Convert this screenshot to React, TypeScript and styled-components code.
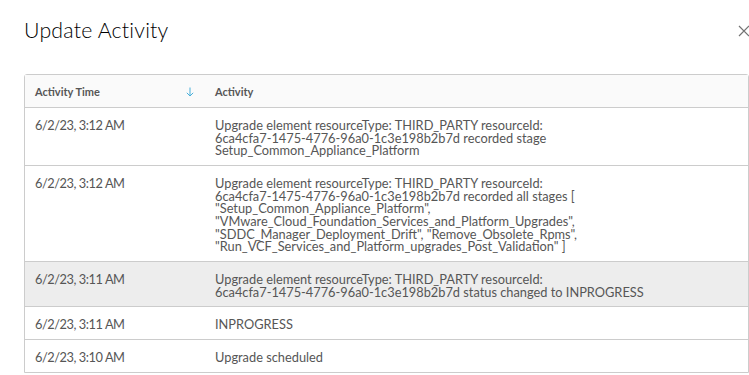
import React from "react";
import styled, { createGlobalStyle } from "styled-components";

const Global = createGlobalStyle`
  html, body { margin: 0; padding: 0; background: #fff; }
  body { font-family: Lato, "Open Sans", "Liberation Sans", sans-serif; overflow: hidden; }
  * { box-sizing: border-box; }
`;

const Modal = styled.div`
  width: 749px;
  height: 375px;
  padding: 0 0 0 24px;
  overflow: hidden;
`;

const Header = styled.div`
  display: flex;
  align-items: center;
  justify-content: space-between;
  height: 62px;
`;

const Title = styled.h3`
  margin: 0 0 2px;
  font-size: 21.3px;
  font-weight: 300;
  color: #000;
  letter-spacing: 0.2px;
`;

const Close = styled.button`
  border: 0;
  background: none;
  padding: 0;
  margin-right: -1px;
  display: flex;
  width: 12px;
  height: 12px;
  cursor: pointer;
`;

const Grid = styled.div`
  margin-top: 12px;
  border: 1px solid #ccc;
  width: 725px;
  border-radius: 3px 3px 0 0;
`;

const Row = styled.div<{ $head?: boolean; $hl?: boolean }>`
  display: grid;
  grid-template-columns: 180px 1fr;
  background: ${(p) => (p.$head ? "#fafafa" : p.$hl ? "#ededed" : "#fff")};
  border-top: ${(p) => (p.$head ? "0" : "1px solid #ccc")};
`;

const HeadCell = styled.div`
  padding: 10px 11px 9px 10px;
  font-size: 11px;
  font-weight: 700;
  color: #565656;
  line-height: 13px;
  display: flex;
  align-items: center;
  justify-content: space-between;
  height: 32px;
`;

const Cell = styled.div<{ $time?: boolean }>`
  padding: 11px 10px 8px;
  font-size: 12.8px;
  line-height: 12.67px;
  color: #565656;
  white-space: pre-line;
  letter-spacing: ${(p) => (p.$time ? "-0.45px" : "0")};
`;

const rows: { time: string; text: string; hl?: boolean }[] = [
  {
    time: "6/2/23, 3:12 AM",
    text:
      "Upgrade element resourceType: THIRD_PARTY resourceId:\n6ca4cfa7-1475-4776-96a0-1c3e198b2b7d recorded stage\nSetup_Common_Appliance_Platform",
  },
  {
    time: "6/2/23, 3:12 AM",
    text:
      'Upgrade element resourceType: THIRD_PARTY resourceId:\n6ca4cfa7-1475-4776-96a0-1c3e198b2b7d recorded all stages [\n"Setup_Common_Appliance_Platform",\n"VMware_Cloud_Foundation_Services_and_Platform_Upgrades",\n"SDDC_Manager_Deployment_Drift", "Remove_Obsolete_Rpms",\n"Run_VCF_Services_and_Platform_upgrades_Post_Validation" ]',
  },
  {
    time: "6/2/23, 3:11 AM",
    text:
      "Upgrade element resourceType: THIRD_PARTY resourceId:\n6ca4cfa7-1475-4776-96a0-1c3e198b2b7d status changed to INPROGRESS",
    hl: true,
  },
  { time: "6/2/23, 3:11 AM", text: "INPROGRESS" },
  { time: "6/2/23, 3:10 AM", text: "Upgrade scheduled" },
];

export default function App() {
  return (
    <>
      <Global />
      <Modal>
        <Header>
          <Title>Update Activity</Title>
          <Close aria-label="close">
            <svg width="12" height="12" viewBox="0 0 12 12">
              <path d="M1 1L11 11M11 1L1 11" stroke="#737373" strokeWidth="1.2" fill="none" />
            </svg>
          </Close>
        </Header>
        <Grid>
          <Row $head>
            <HeadCell>
              <span>Activity Time</span>
              <svg width="8" height="10" viewBox="0 0 8 10">
                <path d="M4 0.5V9M0.8 5.8L4 9L7.2 5.8" stroke="#49afd9" strokeWidth="1" fill="none" />
              </svg>
            </HeadCell>
            <HeadCell>Activity</HeadCell>
          </Row>
          {rows.map((r, i) => (
            <Row key={i} $hl={r.hl}>
              <Cell $time>{r.time}</Cell>
              <Cell>{r.text}</Cell>
            </Row>
          ))}
        </Grid>
      </Modal>
    </>
  );
}
